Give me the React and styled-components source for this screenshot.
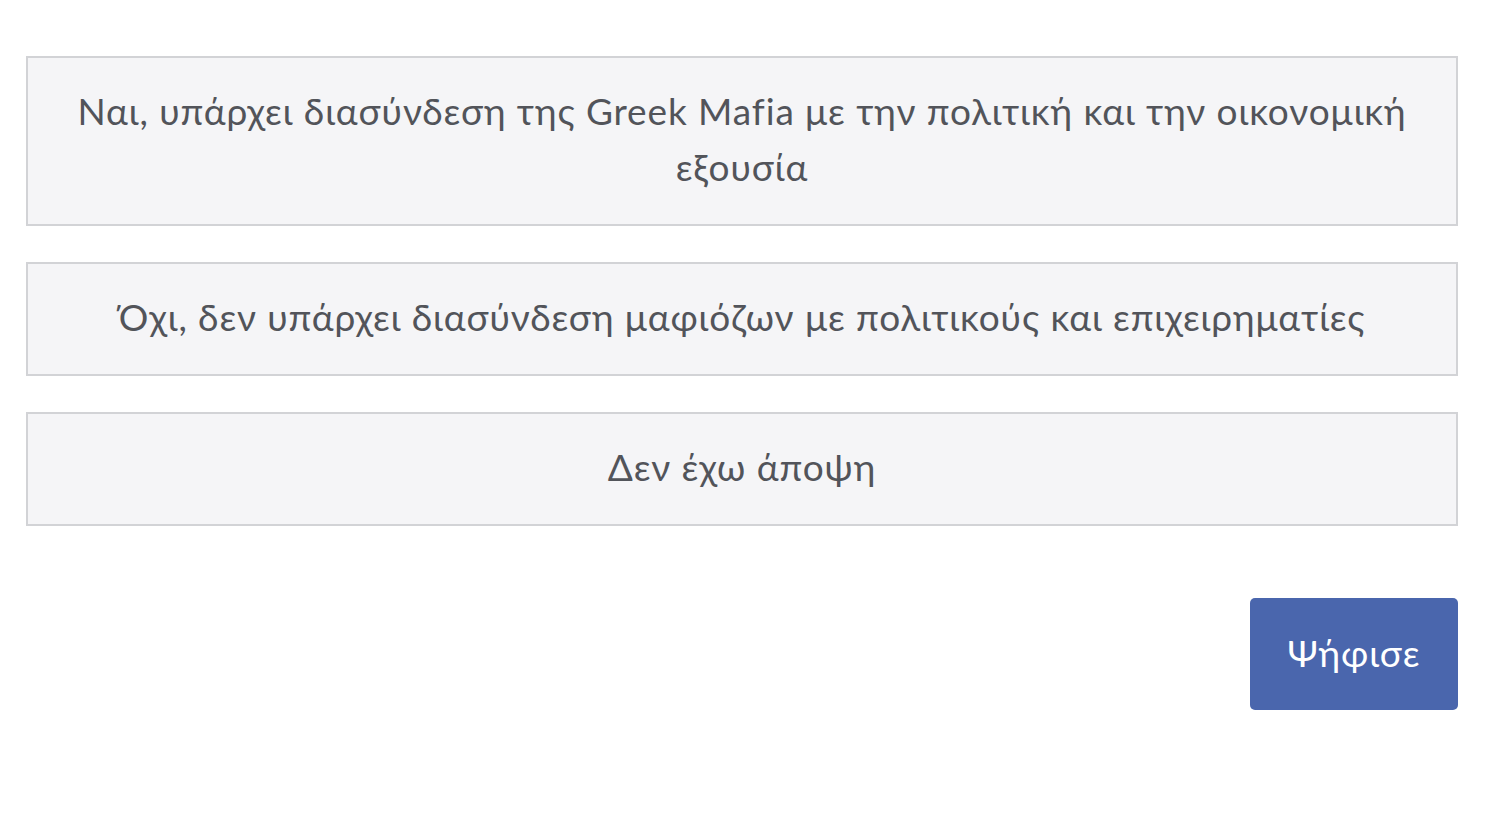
import React from "react";
import styled, { createGlobalStyle } from "styled-components";

const GlobalStyle = createGlobalStyle`
  body {
    margin: 0;
    background: #ffffff;
    font-family: "Lato", "Noto Sans", sans-serif;
  }
`;

const options = [
  "Ναι, υπάρχει διασύνδεση της Greek Mafia με την πολιτική και την οικονομική εξουσία",
  "Όχι, δεν υπάρχει διασύνδεση μαφιόζων με πολιτικούς και επιχειρηματίες",
  "Δεν έχω άποψη",
];

export default function App() {
  return (
    <>
      <GlobalStyle />
      <Poll>
        <OptionList>
          {options.map((text) => (
            <Option key={text}>{text}</Option>
          ))}
        </OptionList>
        <Footer>
          <VoteButton>Ψήφισε</VoteButton>
        </Footer>
      </Poll>
    </>
  );
}

const Poll = styled.div`
  padding: 56px 48px 0 26px;
  display: flex;
  flex-direction: column;
`;

const OptionList = styled.div`
  display: flex;
  flex-direction: column;
  gap: 36px;
`;

const Option = styled.div`
  border: 2px solid #d2d3d6;
  background: #f5f5f7;
  padding: 25px 40px 29px;
  text-align: center;
  font-size: 37px;
  line-height: 56px;
  color: #52545a;
  letter-spacing: 0.9px;
  cursor: pointer;
`;

const Footer = styled.div`
  display: flex;
  justify-content: flex-end;
  margin-top: 72px;
`;

const VoteButton = styled.button`
  width: 208px;
  height: 112px;
  padding: 0 0 4px;
  border: none;
  border-radius: 5px;
  background: #4a66ad;
  color: #ffffff;
  font-family: "Lato", "Noto Sans", sans-serif;
  font-size: 37px;
  letter-spacing: 0.9px;
  cursor: pointer;
`;
